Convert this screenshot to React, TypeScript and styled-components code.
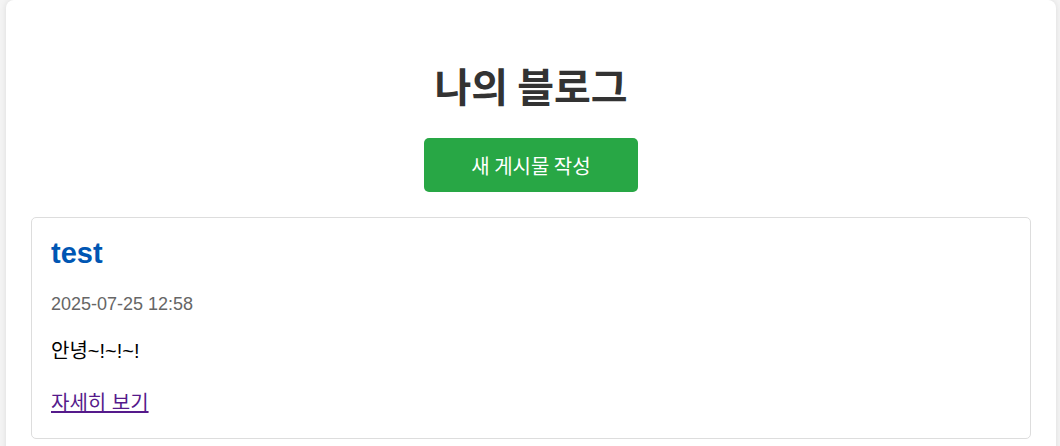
import styled, { createGlobalStyle } from "styled-components";

const GlobalStyle = createGlobalStyle`
  body {
    margin: 0;
    background: #f4f4f4;
    font-family: "Liberation Sans", "Noto Sans CJK KR", sans-serif;
  }
`;

const Container = styled.div`
  width: 1050px;
  margin: 0 0 0 6px;
  padding: 0 25px 40px;
  box-sizing: border-box;
  background: #fff;
  border-radius: 8px;
  box-shadow: 0 0 6px rgba(0, 0, 0, 0.1);
  display: flex;
  flex-direction: column;
  align-items: center;
`;

const Title = styled.h1`
  margin: 62px 0 0;
  font-family: "Noto Sans CJK KR", sans-serif;
  font-size: 40px;
  line-height: 46px;
  font-weight: 700;
  color: #333;
`;

const WriteButton = styled.button`
  margin-top: 30px;
  height: 54px;
  padding: 0 47px;
  border: none;
  border-radius: 5px;
  background: #28a745;
  color: #fff;
  font-family: "Noto Sans CJK KR", sans-serif;
  font-size: 20px;
  cursor: pointer;
`;

const PostList = styled.div`
  margin-top: 25px;
  align-self: stretch;
  display: flex;
  flex-direction: column;
  gap: 20px;
`;

const PostCard = styled.article`
  border: 1px solid #ddd;
  border-radius: 5px;
  padding: 18px 19px 24px;
  display: flex;
  flex-direction: column;
  align-items: flex-start;
`;

const PostTitle = styled.h2`
  margin: 0;
  font-size: 29px;
  line-height: 34px;
  font-weight: 700;
  color: #0056b3;
`;

const PostDate = styled.div`
  margin-top: 23px;
  font-size: 18px;
  line-height: 22px;
  color: #666;
`;

const PostBody = styled.p`
  margin: 25px 0 0;
  font-size: 20px;
  line-height: 22px;
  color: #000;
`;

const DetailLink = styled.a`
  margin-top: 30px;
  font-size: 20px;
  line-height: 22px;
  color: #551a8b;
  text-decoration: underline;
`;

type Post = {
  id: number;
  title: string;
  date: string;
  content: string;
};

const posts: Post[] = [
  { id: 1, title: "test", date: "2025-07-25 12:58", content: "안녕~!~!~!" },
];

function App() {
  return (
    <>
      <GlobalStyle />
      <Container>
        <Title>나의 블로그</Title>
        <WriteButton>새 게시물 작성</WriteButton>
        <PostList>
          {posts.map((post) => (
            <PostCard key={post.id}>
              <PostTitle>{post.title}</PostTitle>
              <PostDate>{post.date}</PostDate>
              <PostBody>{post.content}</PostBody>
              <DetailLink href="#">자세히 보기</DetailLink>
            </PostCard>
          ))}
        </PostList>
      </Container>
    </>
  );
}

export default App;
